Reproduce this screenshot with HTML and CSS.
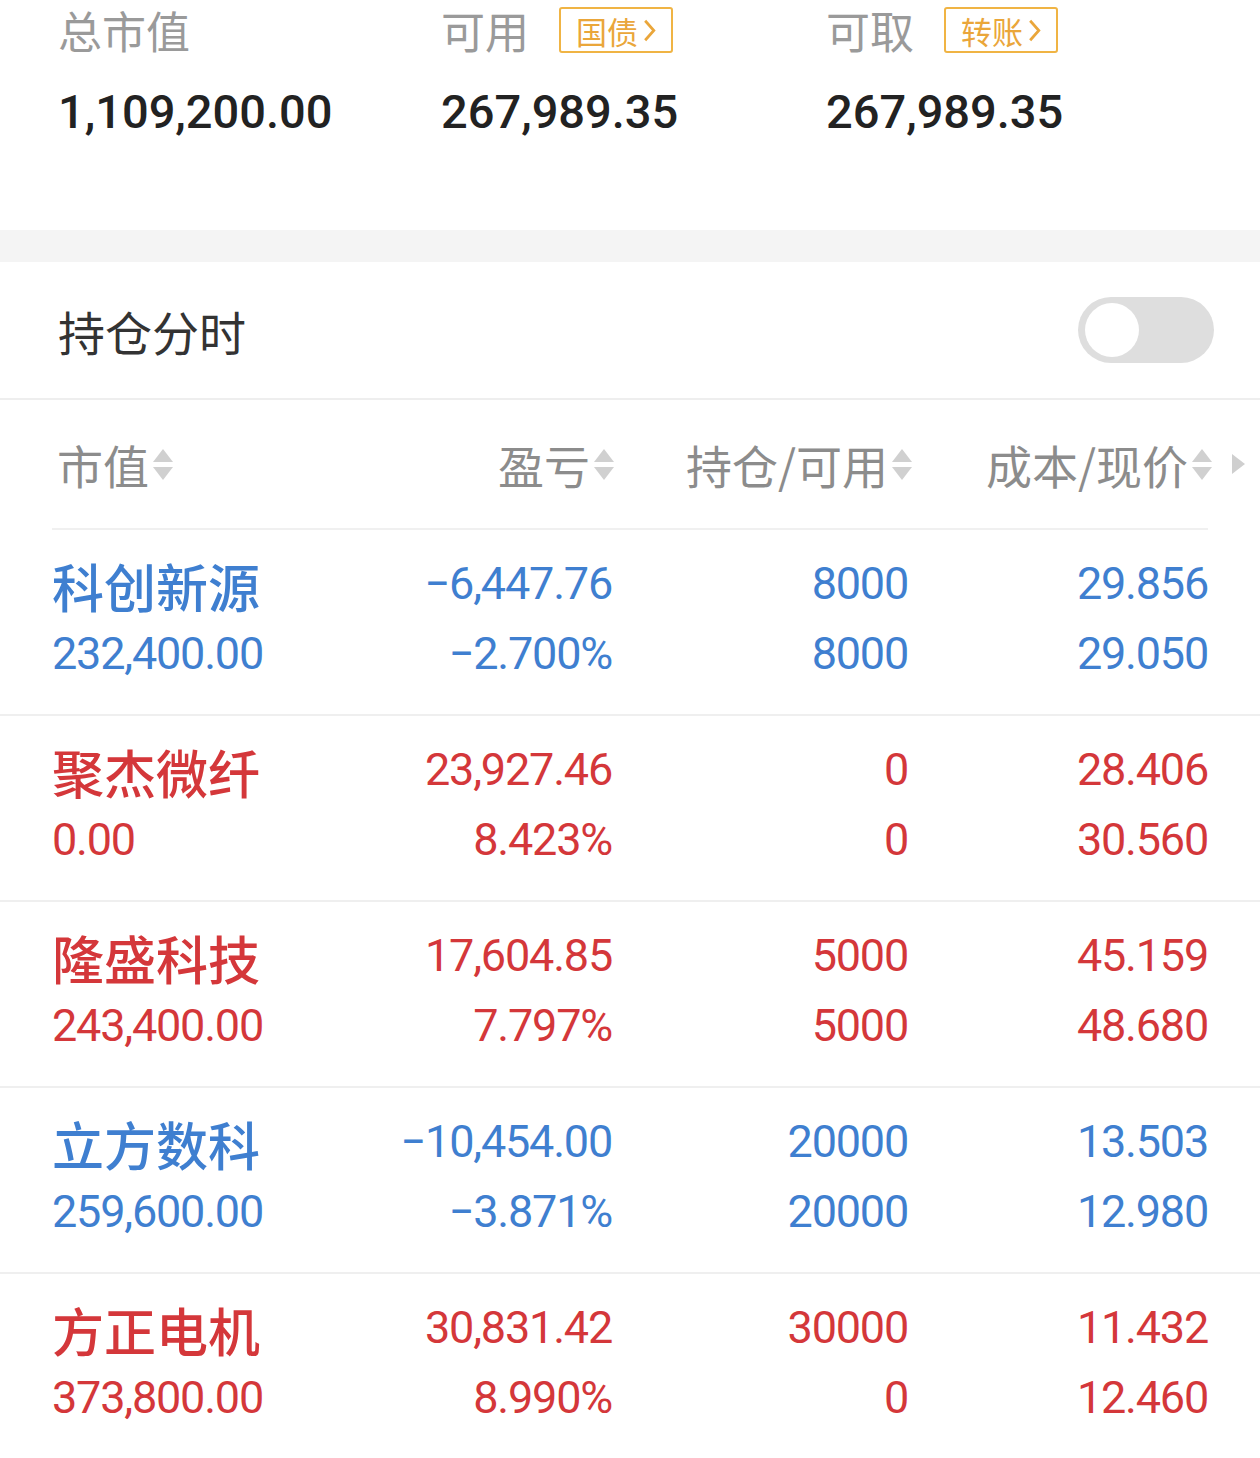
FILE: index.html
```html
<!DOCTYPE html>
<html lang="zh-CN">
<head>
    <meta charset="UTF-8">
    <meta name="viewport" content="width=device-width, initial-scale=1.0">
    <title>持仓</title>
    <link rel="stylesheet" href="styles.css">
</head>
<body>
    <!-- 资产概览 -->
    <div class="resumen">
        <div class="celda">
            <div class="etiqueta">总市值</div>
            <div class="valor">1,109,200.00</div>
        </div>
        <div class="celda">
            <div class="etiqueta">可用 <span class="chip">国债<svg viewBox="0 0 12 22"><polyline points="2,2 10,11 2,20"/></svg></span></div>
            <div class="valor">267,989.35</div>
        </div>
        <div class="celda">
            <div class="etiqueta">可取 <span class="chip">转账<svg viewBox="0 0 12 22"><polyline points="2,2 10,11 2,20"/></svg></span></div>
            <div class="valor">267,989.35</div>
        </div>
    </div>

    <div class="franja"></div>

    <!-- 持仓分时 开关 -->
    <div class="fila-switch">
        <span>持仓分时</span>
        <div class="switch"><div class="bola"></div></div>
    </div>

    <!-- 表头 -->
    <div class="cabecera">
        <div class="col izq">市值<i class="orden"></i></div>
        <div class="col">盈亏<i class="orden"></i></div>
        <div class="col">持仓/可用<i class="orden"></i></div>
        <div class="col">成本/现价<i class="orden"></i></div>
        <div class="mas"></div>
    </div>
    <div class="linea"></div>

    <!-- 持仓列表 -->
    <div class="fila baja">
        <div class="col izq"><div class="nombre">科创新源</div><div class="num">232,400.00</div></div>
        <div class="col"><div class="num">−6,447.76</div><div class="num">−2.700%</div></div>
        <div class="col"><div class="num">8000</div><div class="num">8000</div></div>
        <div class="col"><div class="num">29.856</div><div class="num">29.050</div></div>
    </div>
    <div class="fila sube">
        <div class="col izq"><div class="nombre">聚杰微纤</div><div class="num">0.00</div></div>
        <div class="col"><div class="num">23,927.46</div><div class="num">8.423%</div></div>
        <div class="col"><div class="num">0</div><div class="num">0</div></div>
        <div class="col"><div class="num">28.406</div><div class="num">30.560</div></div>
    </div>
    <div class="fila sube">
        <div class="col izq"><div class="nombre">隆盛科技</div><div class="num">243,400.00</div></div>
        <div class="col"><div class="num">17,604.85</div><div class="num">7.797%</div></div>
        <div class="col"><div class="num">5000</div><div class="num">5000</div></div>
        <div class="col"><div class="num">45.159</div><div class="num">48.680</div></div>
    </div>
    <div class="fila baja">
        <div class="col izq"><div class="nombre">立方数科</div><div class="num">259,600.00</div></div>
        <div class="col"><div class="num">−10,454.00</div><div class="num">−3.871%</div></div>
        <div class="col"><div class="num">20000</div><div class="num">20000</div></div>
        <div class="col"><div class="num">13.503</div><div class="num">12.980</div></div>
    </div>
    <div class="fila sube">
        <div class="col izq"><div class="nombre">方正电机</div><div class="num">373,800.00</div></div>
        <div class="col"><div class="num">30,831.42</div><div class="num">8.990%</div></div>
        <div class="col"><div class="num">30000</div><div class="num">0</div></div>
        <div class="col"><div class="num">11.432</div><div class="num">12.460</div></div>
    </div>
</body>
</html>
```

FILE: styles.css
```css
/* Cuerpo */
body {
    margin: 0;
    width: 1260px;
    background-color: #fff;
    font-family: "Noto Sans CJK SC", "Noto Sans", sans-serif;
    color: #333;
}

/* Resumen de activos */
.resumen {
    display: grid;
    grid-template-columns: 383px 385px 1fr;
    padding: 0 0 88px 58px;
}

.etiqueta {
    display: flex;
    align-items: center;
    height: 60px;
    font-size: 44px;
    color: #9a9a9a;
}

.chip {
    display: inline-flex;
    align-items: center;
    gap: 5px;
    margin-left: 30px;
    height: 46px;
    box-sizing: border-box;
    padding: 0 15px 0 15px;
    border: 2px solid #f0b444;
    border-radius: 3px;
    font-size: 31px;
    color: #eaa63a;
}

.chip svg {
    width: 13px;
    height: 25px;
    fill: none;
    stroke: #eaa63a;
    stroke-width: 2.5;
}

.valor {
    margin-top: 22px;
    height: 60px;
    line-height: 60px;
    font-family: Roboto, "Noto Sans", sans-serif;
    font-weight: 500;
    font-size: 47px;
    color: #222;
}

/* Franja gris */
.franja {
    height: 32px;
    background-color: #f4f4f4;
}

/* Fila del interruptor */
.fila-switch {
    display: flex;
    align-items: center;
    justify-content: space-between;
    height: 136px;
    padding: 0 46px 0 58px;
    border-bottom: 2px solid #eeeeee;
    font-size: 47px;
    color: #333;
}

.switch {
    width: 136px;
    height: 66px;
    border-radius: 33px;
    background-color: #dedede;
    display: flex;
    align-items: center;
    padding-left: 7px;
    box-sizing: border-box;
}

.bola {
    width: 54px;
    height: 54px;
    border-radius: 50%;
    background-color: #fff;
}

/* Cabecera de la tabla */
.cabecera {
    display: grid;
    grid-template-columns: 304px 258px 298px 300px 1fr;
    align-items: center;
    height: 128px;
    padding-left: 52px;
    font-size: 46px;
    color: #8c8c8c;
}

.cabecera .col {
    display: flex;
    align-items: center;
    justify-content: flex-end;
}

.cabecera .col.izq {
    justify-content: flex-start;
    padding-left: 5px;
}

/* Icono de orden */
.orden {
    display: inline-flex;
    flex-direction: column;
    gap: 5px;
    margin-left: 4px;
    width: 20px;
}

.orden::before,
.orden::after {
    content: "";
    width: 0;
    height: 0;
    border-left: 10px solid transparent;
    border-right: 10px solid transparent;
}

.orden::before {
    border-bottom: 13px solid #d0d0d0;
}

.orden::after {
    border-top: 13px solid #d0d0d0;
}

.mas {
    width: 0;
    height: 0;
    margin-left: 20px;
    border-top: 10px solid transparent;
    border-bottom: 10px solid transparent;
    border-left: 13px solid #cfcfcf;
}

.linea {
    height: 2px;
    margin: 0 52px;
    background-color: #f0f0f0;
}

/* Filas de posiciones */
.fila {
    display: grid;
    grid-template-columns: 304px 256px 296px 300px;
    height: 186px;
    padding: 19px 52px 0;
    box-sizing: border-box;
    border-bottom: 2px solid #efefef;
}

.fila:last-child {
    border-bottom: none;
}

.fila .col {
    text-align: right;
}

.fila .col.izq {
    text-align: left;
}

.num {
    height: 70px;
    line-height: 70px;
    font-family: Roboto, "Noto Sans", sans-serif;
    font-size: 45px;
    letter-spacing: -1.2px;
}

.nombre {
    height: 70px;
    line-height: 74px;
    font-size: 52px;
    font-weight: 500;
}

.baja { color: #3f7fd0; }
.sube { color: #d4373a; }
```
